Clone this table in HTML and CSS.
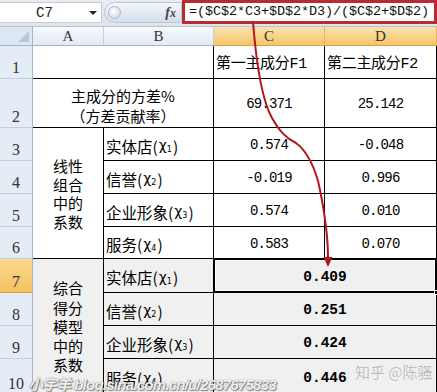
FILE: index.html
```html
<!DOCTYPE html>
<html lang="zh">
<head>
<meta charset="utf-8">
<title>主成分综合得分</title>
<link rel="stylesheet" href="styles.css">
</head>
<body>
<div class="app">
  <div class="fbar">
    <div class="namebox"><span class="nb-text">C7</span><span class="nb-arrow"></span></div>
    <div class="pill"><span class="knob"></span><span class="fx">f<i>x</i></span></div>
    <div class="formula">=($C$2*C3+$D$2*D3)/($C$2+$D$2)</div>
  </div>
  <div class="sheet">
    <div class="corner"><span class="tri"></span></div>
    <div class="ch">A</div>
    <div class="ch">B</div>
    <div class="ch sel">C</div>
    <div class="ch sel">D</div>

    <div class="rh">1</div>
    <div class="c span2"></div>
    <div class="c txt">第一主成分F1</div>
    <div class="c txt">第二主成分F2</div>

    <div class="rh">2</div>
    <div class="c span2 mid">主成分的方差%<br>（方差贡献率）</div>
    <div class="c num">69.371</div>
    <div class="c num">25.142</div>

    <div class="rh">3</div>
    <div class="c rows4 group">线性<br>组合<br>中的<br>系数</div>
    <div class="c lbl">实体店(<span class="chi">χ<sub>1</sub></span>)</div>
    <div class="c num">0.574</div>
    <div class="c num">-0.048</div>

    <div class="rh">4</div>
    <div class="c lbl">信誉(<span class="chi">χ<sub>2</sub></span>)</div>
    <div class="c num">-0.019</div>
    <div class="c num">0.996</div>

    <div class="rh">5</div>
    <div class="c lbl">企业形象(<span class="chi">χ<sub>3</sub></span>)</div>
    <div class="c num">0.574</div>
    <div class="c num">0.010</div>

    <div class="rh">6</div>
    <div class="c lbl">服务(<span class="chi">χ<sub>4</sub></span>)</div>
    <div class="c num">0.583</div>
    <div class="c num">0.070</div>

    <div class="rh rsel">7</div>
    <div class="c rows4 group gray group5">综合<br>得分<br>模型<br>中的<br>系数</div>
    <div class="c lbl gray">实体店(<span class="chi">χ<sub>1</sub></span>)</div>
    <div class="c span2 gray bnum active">0.409<span class="handle"></span></div>

    <div class="rh">8</div>
    <div class="c lbl gray">信誉(<span class="chi">χ<sub>2</sub></span>)</div>
    <div class="c span2 gray bnum">0.251</div>

    <div class="rh">9</div>
    <div class="c lbl gray">企业形象(<span class="chi">χ<sub>3</sub></span>)</div>
    <div class="c span2 gray bnum">0.424</div>

    <div class="rh">10</div>
    <div class="c lbl gray">服务(<span class="chi">χ<sub>4</sub></span>)</div>
    <div class="c span2 gray bnum">0.446</div>
  </div>

  <svg class="arrow" width="437" height="392" viewBox="0 0 437 392">
    <path d="M253 22 C256 60, 262 100, 272 118 C280 132, 286 138, 296 143 C306 150, 316 168, 320 190 C325 215, 328 240, 328 258" fill="none" stroke="#b3161d" stroke-width="2"/>
    <polygon points="323.5,257 332.5,257 328,267" fill="#b3161d"/>
  </svg>
  <div class="wm1">小宇羊 blog.sina.com.cn/u/2687675833</div>
  <div class="wm2">知乎 @陈骚</div>
</div>
</body>
</html>
```
FILE: styles.css
```css
* { box-sizing: border-box; }
html, body { margin: 0; padding: 0; background: #fff; }
.app {
  position: relative;
  width: 437px;
  height: 392px;
  overflow: hidden;
  font-family: "Liberation Mono", "Noto Sans CJK SC", monospace;
  color: #000;
}

/* formula bar */
.fbar {
  display: flex;
  height: 27px;
  background: linear-gradient(#e9edf2, #dfe5ec);
  border-bottom: 1px solid #b7c3d1;
  padding-top: 2px;
}
.namebox {
  width: 102px;
  height: 21px;
  background: #fff;
  border: 1px solid #c5ccd5;
  border-left: none;
  display: flex;
  align-items: center;
  position: relative;
}
.nb-text {
  margin-left: 36px;
  font-family: "Liberation Mono", monospace;
  font-size: 14px;
  color: #222;
}
.nb-arrow {
  position: absolute;
  right: 4px;
  top: 8px;
  width: 0; height: 0;
  border-left: 4px solid transparent;
  border-right: 4px solid transparent;
  border-top: 4px solid #222;
}
.pill {
  width: 78px;
  height: 21px;
  margin-left: 2px;
  border-radius: 11px 0 0 11px;
  background: linear-gradient(#f4f7fb, #d3deeb);
  border: 1px solid #b9c6d6;
  display: flex;
  align-items: center;
  justify-content: space-between;
  padding: 0 5px 0 3px;
}
.knob {
  width: 13px; height: 13px;
  border-radius: 50%;
  background: radial-gradient(circle at 40% 40%, #fff, #c9d3df);
  border: 1px solid #aab6c6;
}
.fx {
  font-family: "Liberation Serif", serif;
  font-style: italic;
  font-weight: bold;
  font-size: 14px;
  color: #444;
}
.fx i { font-size: 12px; }
.formula {
  flex: 1;
  height: 24px;
  margin-top: -2px;
  border: 3px solid #bb2a31;
  background: #fff;
  font-family: "Liberation Mono", monospace;
  font-size: 13.5px;
  line-height: 17px;
  padding-left: 4px;
  letter-spacing: -0.1px;
  color: #111;
  white-space: nowrap;
}

/* sheet grid */
.sheet {
  display: grid;
  grid-template-columns: 33px 71px 110px 111px 112px;
  grid-template-rows: 19px 33px 49px 33px 33px 33px 32px 34px 33px 33px 36px;
}
.corner {
  background: #dde7f3;
  border-right: 1px solid #9eb6ce;
  border-bottom: 1px solid #9eb6ce;
  position: relative;
}
.tri {
  position: absolute;
  right: 3px; bottom: 3px;
  width: 0; height: 0;
  border-left: 11px solid transparent;
  border-bottom: 11px solid #b6c7dc;
}
.ch {
  background: linear-gradient(#f7f9fc, #e3eaf3);
  border-right: 1px solid #c2d0de;
  border-bottom: 1px solid #9eb6ce;
  text-align: center;
  font-family: "Liberation Serif", serif;
  font-size: 15px;
  line-height: 18px;
  color: #333;
}
.ch.sel {
  background: linear-gradient(#fbe3ab, #f4c56a);
  border-right-color: #e8b55a;
  border-bottom-color: #e0a040;
}
.rh {
  background: #e4ecf6;
  border-right: 1px solid #9eb6ce;
  border-bottom: 1px solid #c2d0de;
  display: flex;
  align-items: flex-end;
  justify-content: center;
  font-family: "Liberation Serif", serif;
  font-size: 16px;
  line-height: 18px;
  color: #333;
  padding-bottom: 1px;
}
.rh.rsel {
  background: linear-gradient(#fbd88f, #f4c262);
  border-bottom-color: #e0a040;
}

.c {
  border-right: 1px solid #000;
  border-bottom: 1px solid #000;
  display: flex;
  align-items: center;
  font-size: 15px;
  white-space: nowrap;
}
.span2 { grid-column: span 2; }
.rows4 { grid-row: span 4; }
.txt { padding-left: 2px; font-size: 15px; letter-spacing: -0.3px; }
.mid {
  justify-content: center;
  text-align: center;
  line-height: 20px;
  padding-top: 5px;
  font-family: "Noto Sans CJK SC", sans-serif;
}
.num {
  justify-content: center;
  font-size: 14px;
  letter-spacing: -0.8px;
  padding-top: 2px;
}
.group {
  justify-content: center;
  text-align: center;
  font-family: "Noto Sans CJK SC", sans-serif;
  line-height: 18.5px;
  padding-top: 2px;
}
.group5 { line-height: 19.3px; padding-top: 0; }
.lbl {
  padding-left: 2px;
  padding-top: 3px;
  font-family: "Noto Sans CJK SC", sans-serif;
  font-size: 15.5px;
}
.chi {
  font-family: "DejaVu Sans", sans-serif;
  font-size: 14px;
  margin: 0 1px;
}
.chi sub { font-size: 8px; vertical-align: -2px; }
.gray { background: #f0f0f0; }
.bnum {
  justify-content: center;
  font-weight: bold;
  font-size: 14.5px;
  padding-top: 2px;
}
.active {
  position: relative;
  border: 2px solid #000;
  box-shadow: inset 0 0 0 1px #fff;
  margin-top: -1px;
  margin-left: -1px;
}
.handle {
  position: absolute;
  right: -4px;
  bottom: -4px;
  width: 5px; height: 5px;
  background: #000;
  border: 1px solid #fff;
}

/* overlays */
.arrow {
  position: absolute;
  left: 0; top: 0;
  pointer-events: none;
}
.wm1 {
  position: absolute;
  left: 28px;
  top: 373px;
  font-family: "Liberation Sans", "Noto Sans CJK SC", sans-serif;
  font-weight: bold;
  font-style: italic;
  font-size: 15px;
  color: rgba(255,255,255,0.92);
  text-shadow: 0 0 1px #555, 1px 1px 1px rgba(0,0,0,0.45);
  white-space: nowrap;
  letter-spacing: -0.75px;
}
.wm2 {
  position: absolute;
  left: 355px;
  top: 361px;
  font-family: "Noto Sans CJK SC", sans-serif;
  font-size: 15px;
  color: rgba(185,185,185,0.95);
  text-shadow: 0 0 1px #fff;
  white-space: nowrap;
}
```
